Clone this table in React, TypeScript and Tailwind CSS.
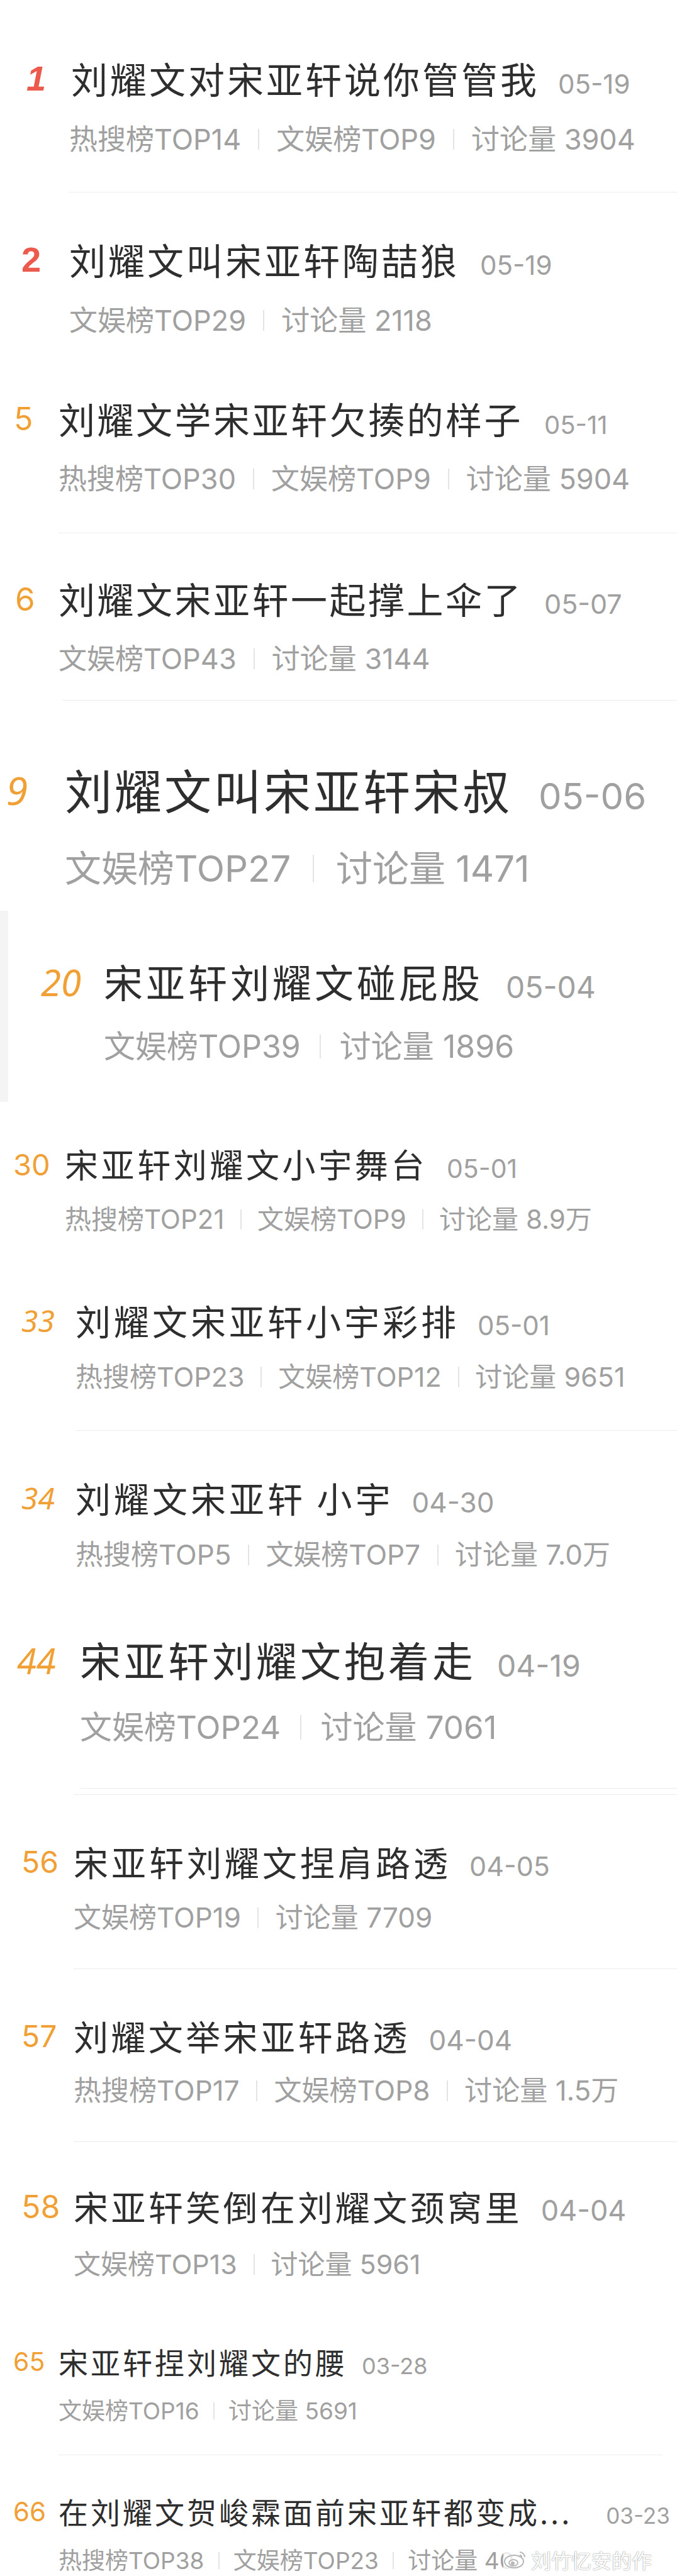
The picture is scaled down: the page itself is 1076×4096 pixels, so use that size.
import { Fragment } from "react";

type Item = {
  rank: string;
  title: string;
  date: string;
  meta: string[];
  box: string; // block height + top padding
  lead: string; // rank column (title starts after it)
  rankCls: string;
  titleCls: string;
  dateCls: string;
  metaCls: string;
  sep?: string;
  sep2?: string;
  strip?: boolean;
  mark?: boolean;
};

const RED = "text-[#eb5a4c] font-bold font-['Liberation_Sans']";
const ORANGE = "text-[#f0a035] font-['Inter']";
const SLANT = "text-[#f0a035] italic font-['Noto_Sans']";

const ITEMS: Item[] = [
  {
    rank: "1",
    title: "刘耀文对宋亚轩说你管管我",
    date: "05-19",
    meta: ["热搜榜TOP14", "文娱榜TOP9", "讨论量 3904"],
    box: "h-[305px] pt-[95px]",
    lead: "w-[113px] pl-[42px]",
    rankCls: `text-[56px] italic ${RED}`,
    titleCls: "text-[58px] tracking-[4px]",
    dateCls: "ml-[30px] text-[42px]",
    metaCls: "mt-[44px] pl-[110px] text-[45px]",
    sep: "ml-[110px]",
  },
  {
    rank: "2",
    title: "刘耀文叫宋亚轩陶喆狼",
    date: "05-19",
    meta: ["文娱榜TOP29", "讨论量 2118"],
    box: "h-[294px] pt-[77px]",
    lead: "w-[110px] pl-[34px]",
    rankCls: `text-[56px] ${RED}`,
    titleCls: "text-[58px] tracking-[4px]",
    dateCls: "ml-[33px] text-[42px]",
    metaCls: "mt-[44px] pl-[110px] text-[45px]",
  },
  {
    rank: "5",
    title: "刘耀文学宋亚轩欠揍的样子",
    date: "05-11",
    meta: ["热搜榜TOP30", "文娱榜TOP9", "讨论量 5904"],
    box: "h-[247px] pt-[36px]",
    lead: "w-[93px] pl-[22px]",
    rankCls: `text-[50px] ${ORANGE}`,
    titleCls: "text-[58px] tracking-[3.5px]",
    dateCls: "ml-[34px] text-[40px]",
    metaCls: "mt-[43px] pl-[93px] text-[45px]",
    sep: "ml-[93px]",
  },
  {
    rank: "6",
    title: "刘耀文宋亚轩一起撑上伞了",
    date: "05-07",
    meta: ["文娱榜TOP43", "讨论量 3144"],
    box: "h-[265px] pt-[74px]",
    lead: "w-[93px] pl-[24px]",
    rankCls: `text-[51px] ${ORANGE}`,
    titleCls: "text-[58px] tracking-[3.5px]",
    dateCls: "ml-[34px] text-[43px]",
    metaCls: "mt-[43px] pl-[93px] text-[45px]",
    sep: "ml-[100px]",
  },
  {
    rank: "9",
    title: "刘耀文叫宋亚轩宋叔",
    date: "05-06",
    meta: ["文娱榜TOP27", "讨论量 1471"],
    box: "h-[334px] pt-[103px]",
    lead: "w-[103px] pl-[10px]",
    rankCls: `text-[62px] ${SLANT}`,
    titleCls: "text-[75px] tracking-[4px]",
    dateCls: "ml-[42px] text-[58px]",
    metaCls: "mt-[57px] pl-[103px] text-[58px]",
  },
  {
    rank: "20",
    title: "宋亚轩刘耀文碰屁股",
    date: "05-04",
    meta: ["文娱榜TOP39", "讨论量 1896"],
    box: "h-[304px] pt-[81px]",
    lead: "w-[152px] pl-[52px]",
    rankCls: `text-[58px] ${SLANT}`,
    titleCls: "text-[62px] tracking-[5px]",
    dateCls: "ml-[36px] text-[48px]",
    metaCls: "mt-[45px] pl-[152px] text-[50px]",
    strip: true,
  },
  {
    rank: "30",
    title: "宋亚轩刘耀文小宇舞台",
    date: "05-01",
    meta: ["热搜榜TOP21", "文娱榜TOP9", "讨论量 8.9万"],
    box: "h-[248px] pt-[72px]",
    lead: "w-[103px] pl-[21px]",
    rankCls: `text-[47px] ${ORANGE}`,
    titleCls: "text-[53px] tracking-[4.6px]",
    dateCls: "ml-[31px] text-[41px]",
    metaCls: "mt-[39px] pl-[103px] text-[42px]",
  },
  {
    rank: "33",
    title: "刘耀文宋亚轩小宇彩排",
    date: "05-01",
    meta: ["热搜榜TOP23", "文娱榜TOP12", "讨论量 9651"],
    box: "h-[274px] pt-[71px]",
    lead: "w-[120px] pl-[34px]",
    rankCls: `text-[48px] ${SLANT}`,
    titleCls: "text-[56px] tracking-[5px]",
    dateCls: "ml-[29px] text-[42px]",
    metaCls: "mt-[39px] pl-[120px] text-[43px]",
    sep: "ml-[120px]",
  },
  {
    rank: "34",
    title: "刘耀文宋亚轩 小宇",
    date: "04-30",
    meta: ["热搜榜TOP5", "文娱榜TOP7", "讨论量 7.0万"],
    box: "h-[265px] pt-[78px]",
    lead: "w-[120px] pl-[34px]",
    rankCls: `text-[48px] ${SLANT}`,
    titleCls: "text-[56px] tracking-[5px]",
    dateCls: "ml-[29px] text-[44px]",
    metaCls: "mt-[39px] pl-[120px] text-[44px]",
  },
  {
    rank: "44",
    title: "宋亚轩刘耀文抱着走",
    date: "04-19",
    meta: ["文娱榜TOP24", "讨论量 7061"],
    box: "h-[303px] pt-[66px]",
    lead: "w-[127px] pl-[27px]",
    rankCls: `text-[56px] ${SLANT}`,
    titleCls: "text-[65px] tracking-[5px]",
    dateCls: "ml-[33px] text-[48px]",
    metaCls: "mt-[48px] pl-[127px] text-[51px]",
    sep: "ml-[127px]",
    sep2: "ml-[117px]",
  },
  {
    rank: "56",
    title: "宋亚轩刘耀文捏肩路透",
    date: "04-05",
    meta: ["文娱榜TOP19", "讨论量 7709"],
    box: "h-[276px] pt-[78px]",
    lead: "w-[117px] pl-[34px]",
    rankCls: `text-[48px] ${ORANGE}`,
    titleCls: "text-[55px] tracking-[5px]",
    dateCls: "ml-[29px] text-[43px]",
    metaCls: "mt-[38px] pl-[117px] text-[44px]",
    sep: "ml-[117px]",
  },
  {
    rank: "57",
    title: "刘耀文举宋亚轩路透",
    date: "04-04",
    meta: ["热搜榜TOP17", "文娱榜TOP8", "讨论量 1.5万"],
    box: "h-[274px] pt-[78px]",
    lead: "w-[117px] pl-[34px]",
    rankCls: `text-[48px] ${ORANGE}`,
    titleCls: "text-[55px] tracking-[4.4px]",
    dateCls: "ml-[30px] text-[44px]",
    metaCls: "mt-[36px] pl-[117px] text-[44px]",
    sep: "ml-[117px]",
  },
  {
    rank: "58",
    title: "宋亚轩笑倒在刘耀文颈窝里",
    date: "04-04",
    meta: ["文娱榜TOP13", "讨论量 5961"],
    box: "h-[274px] pt-[74px]",
    lead: "w-[117px] pl-[34px]",
    rankCls: `text-[50px] ${ORANGE}`,
    titleCls: "text-[55px] tracking-[4.4px]",
    dateCls: "ml-[30px] text-[45px]",
    metaCls: "mt-[42px] pl-[117px] text-[43px]",
  },
  {
    rank: "65",
    title: "宋亚轩捏刘耀文的腰",
    date: "03-28",
    meta: ["文娱榜TOP16", "讨论量 5691"],
    box: "h-[223px] pt-[51px]",
    lead: "w-[93px] pl-[21px]",
    rankCls: `text-[41px] ${ORANGE}`,
    titleCls: "text-[47px] tracking-[4px]",
    dateCls: "ml-[23px] text-[36px]",
    metaCls: "mt-[35px] pl-[93px] text-[37px]",
    sep: "ml-[93px] mr-[23px]",
  },
  {
    rank: "66",
    title: "在刘耀文贺峻霖面前宋亚轩都变成...",
    date: "03-23",
    meta: ["热搜榜TOP38", "文娱榜TOP23", "讨论量 40"],
    box: "h-[192px] pt-[65px]",
    lead: "w-[93px] pl-[21px]",
    rankCls: `text-[42px] ${ORANGE}`,
    titleCls: "text-[47px] tracking-[4px]",
    dateCls: "ml-[54px] text-[35px]",
    metaCls: "mt-[35px] pl-[93px] text-[37px]",
    mark: true,
  },
];

// weibo watermark stamped over the last line
function Watermark() {
  return (
    <div className="absolute left-[800px] top-[148px] flex h-[36px] items-center gap-[6px] bg-white/80 pr-[6px]">
      <svg width="38" height="32" viewBox="0 0 38 32" fill="none" stroke="#b8b8b8" strokeWidth="2">
        <ellipse cx="17" cy="19" rx="15" ry="10" />
        <ellipse cx="16" cy="21" rx="7" ry="5" />
        <circle cx="15" cy="22" r="2" fill="#b8b8b8" />
        <path d="M26 4a8 8 0 0 1 8 8" />
        <path d="M26 9a3 3 0 0 1 3 3" />
      </svg>
      <span className="text-[32px] leading-none text-white [text-shadow:0_0_2px_#9a9a9a,0_0_1px_#9a9a9a]">
        刘竹忆安的作
      </span>
    </div>
  );
}

function Row({ it }: { it: Item }) {
  return (
    <>
      <div
        className={`relative flex flex-col ${it.box} ${
          it.strip ? "border-l-[13px] border-[#f4f4f4]" : ""
        }`}
      >
        <div className="flex items-baseline whitespace-nowrap leading-none">
          <div className={`shrink-0 self-center ${it.lead}`}>
            <span className={`leading-none ${it.rankCls}`}>{it.rank}</span>
          </div>
          <span className={`text-[#2e2e2e] ${it.titleCls}`}>{it.title}</span>
          <span className={`font-['Inter','Noto_Sans_CJK_SC',sans-serif] text-[#a0a0a0] ${it.dateCls}`}>
            {it.date}
          </span>
        </div>
        <div
          className={`flex items-center whitespace-nowrap font-['Inter','Noto_Sans_CJK_SC',sans-serif] leading-none text-[#a0a0a0] ${it.metaCls}`}
        >
          {it.meta.map((m, i) => (
            <Fragment key={i}>
              {i > 0 && <span className="mx-[0.6em] h-[0.75em] w-[2px] bg-[#e4e4e4]" />}
              <span>{m}</span>
            </Fragment>
          ))}
        </div>
        {it.mark && <Watermark />}
      </div>
      {it.sep && <div className={`h-px bg-[#ececec] ${it.sep}`} />}
      {it.sep2 && (
        <>
          <div className="h-[9px]" />
          <div className={`h-px bg-[#ececec] ${it.sep2}`} />
        </>
      )}
    </>
  );
}

export default function App() {
  return (
    <div className="w-[1076px] overflow-hidden bg-white font-['Noto_Sans_CJK_SC',sans-serif]">
      {ITEMS.map((it) => (
        <Row key={it.rank} it={it} />
      ))}
    </div>
  );
}
